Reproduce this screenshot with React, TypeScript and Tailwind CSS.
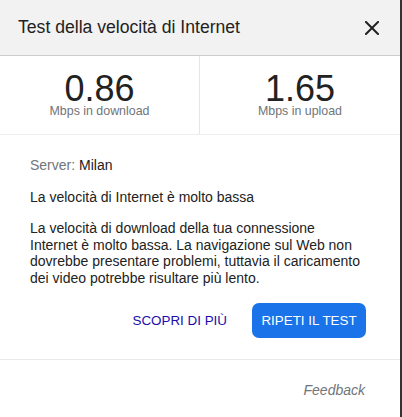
const font = { fontFamily: '"Liberation Sans", Arial, sans-serif' };

function Stat({ value, label, divider }: { value: string; label: string; divider?: boolean }) {
  return (
    <div className={`flex flex-col items-center justify-center ${divider ? 'border-r border-[#e6e6e6]' : ''}`}>
      <div className="text-[36px] leading-[33px] text-[#222]">{value}</div>
      <div className="text-[12.4px] leading-[13px] text-[#70757a]">{label}</div>
    </div>
  );
}

export default function App() {
  return (
    <div className="w-[402px] h-[417px] bg-white flex" style={font}>
      <div className="w-[400px] h-full flex flex-col">
        {/* intestazione */}
        <div className="h-[56px] bg-[#f2f2f2] border-b border-[#cccccc] flex items-center justify-between pl-[18px] pr-[21px]">
          <span className="text-[17.6px] text-[#222]">Test della velocità di Internet</span>
          <svg width="14" height="14" viewBox="0 0 14 14" className="text-[#222]">
            <path d="M1 1L13 13M13 1L1 13" stroke="currentColor" strokeWidth="2" strokeLinecap="square" />
          </svg>
        </div>

        <div className="h-[79px] grid grid-cols-[200px_1fr] border-b border-[#eeeeee]">
          <Stat value="0.86" label="Mbps in download" divider />
          <Stat value="1.65" label="Mbps in upload" />
        </div>

        <div className="pl-[30px] pr-[30px] pt-[22px] text-[14px] leading-[17px] text-[#222]">
          <p>
            <span className="text-[#70757a]">Server: </span>Milan
          </p>
          <p className="mt-[15px]">La velocità di Internet è molto bassa</p>
          <p className="mt-[14px] leading-[16.7px] w-[334px]">
            La velocità di download della tua connessione Internet è molto bassa. La navigazione sul Web non
            dovrebbe presentare problemi, tuttavia il caricamento dei video potrebbe risultare più lento.
          </p>
          <div className="mt-[16px] mb-[21px] flex items-center justify-end gap-[25px] pr-[4px]">
            <button className="text-[13.4px] text-[#1a0dab] uppercase">Scopri di più</button>
            <button className="h-[35px] w-[114px] rounded-[7px] bg-[#1a73e8] text-white text-[13.4px] uppercase">
              Ripeti il test
            </button>
          </div>
        </div>

        <div className="border-t border-[#e8e8e8] pt-[18px] pr-[35px] text-right">
          <span className="italic text-[14px] leading-[17px] text-[#70757a]">Feedback</span>
        </div>
      </div>
      <div className="w-[2px] h-full bg-[#333]" />
    </div>
  );
}
